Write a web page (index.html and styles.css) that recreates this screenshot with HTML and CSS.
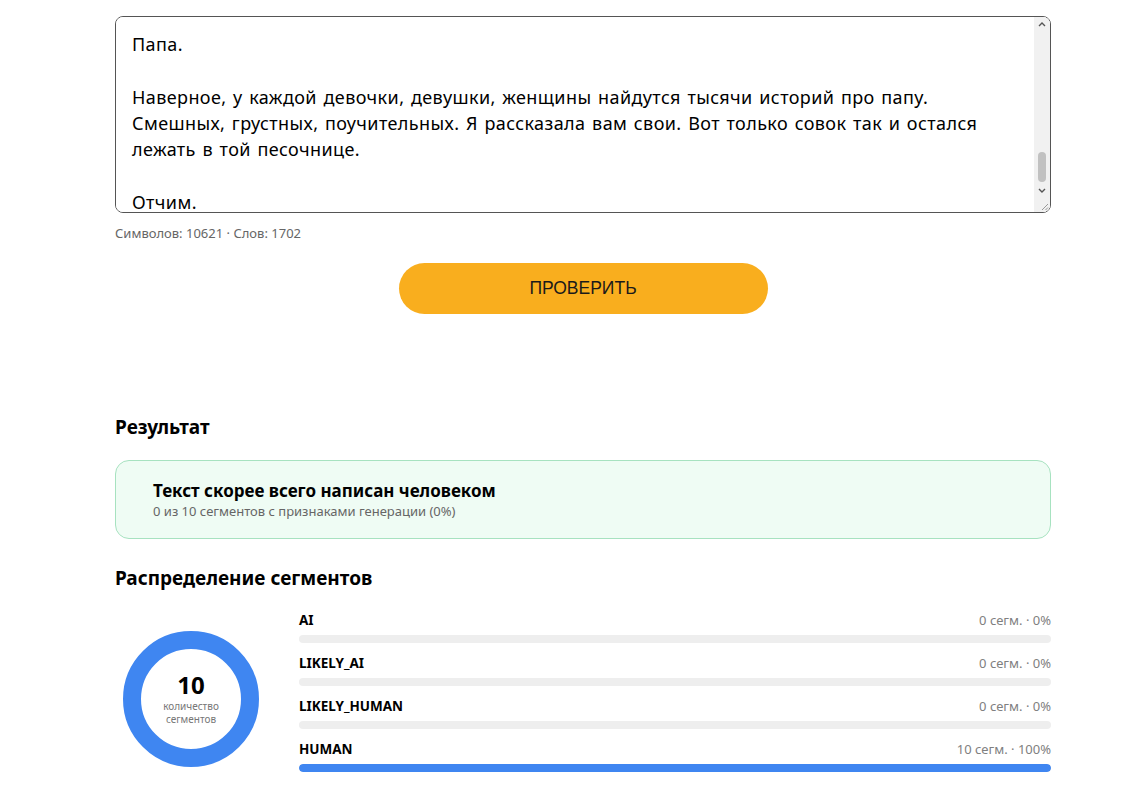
FILE: index.html
```html
<!DOCTYPE html>
<html lang="ru">
<head>
    <meta charset="UTF-8">
    <meta name="viewport" content="width=device-width, initial-scale=1.0">
    <title>Проверка текста</title>
    <link rel="stylesheet" href="styles.css">
</head>
<body>
    <main class="page">
        <section class="input-block">
            <div class="editor">
                <textarea id="source" class="source-text" spellcheck="false">Песочница.

Мне было пять лет, когда папа впервые привёл меня во двор.
Он сел на лавочку, развернул газету и сказал: «Играй».
Я играла. Строила куличики, копала ямки, искала клад.

Потом пришёл мальчик из соседнего подъезда.
Он забрал мой красный совок и не хотел отдавать.
Я плакала, а папа смотрел на меня поверх газеты.
«Разбирайся сама», — сказал он и перевернул страницу.

Я не разобралась. Совок так и остался у мальчика.
А потом мальчик ушёл домой, а совок бросил в песок.
Я его не подняла. Почему-то не захотелось.

Школа.

Папа никогда не проверял мои уроки.
Зато всегда спрашивал, кого я сегодня победила.
Я не понимала, что он имеет в виду.
Поняла гораздо позже, когда его уже не было рядом.

Двор.

Мы гуляли по вечерам, и он молчал.
Я рассказывала ему про подруг, про учительницу, про кота.
Он кивал и смотрел куда-то поверх домов.
Однажды он сказал: «Ты сильнее, чем думаешь».
Я запомнила. Хотя тогда не поверила.

Папа.

Наверное, у каждой девочки, девушки, женщины найдутся тысячи историй про папу. Смешных, грустных, поучительных. Я рассказала вам свои. Вот только совок так и остался лежать в той песочнице.

Отчим.</textarea>
                <!-- scrollbar drawn over the textarea's right edge -->
                <div class="scrollbar">
                    <svg class="sb-arrow" width="16" height="15" viewBox="0 0 16 15"><path d="M5 9 8 6 11 9" fill="none" stroke="#555" stroke-width="1.4"/></svg>
                    <div class="sb-track"><div class="sb-thumb"></div></div>
                    <svg class="sb-arrow" width="16" height="15" viewBox="0 0 16 15"><path d="M5 6 8 9 11 6" fill="none" stroke="#555" stroke-width="1.4"/></svg>
                    <svg class="sb-grip" width="16" height="14" viewBox="0 0 16 14"><path d="M14 6 8 12M14 9.5 11.5 12" stroke="#999" stroke-width="1"/></svg>
                </div>
            </div>
            <div class="counter">Символов: 10621 · Слов: 1702</div>
            <div class="actions">
                <button type="button" class="check-btn">ПРОВЕРИТЬ</button>
            </div>
        </section>

        <section class="result">
            <h2 class="section-title">Результат</h2>
            <div class="verdict">
                <div class="verdict-title">Текст скорее всего написан человеком</div>
                <div class="verdict-sub">0 из 10 сегментов с признаками генерации (0%)</div>
            </div>

            <h2 class="section-title">Распределение сегментов</h2>
            <div class="distribution">
                <div class="donut">
                    <svg width="136" height="136" viewBox="0 0 136 136">
                        <circle cx="68" cy="68" r="59" fill="none" stroke="#3f86f1" stroke-width="18"/>
                    </svg>
                    <div class="donut-center">
                        <div class="donut-value">10</div>
                        <div class="donut-label">количество<br>сегментов</div>
                    </div>
                </div>

                <div class="bars">
                    <div class="bar-row">
                        <div class="bar-head">
                            <span class="bar-name">AI</span>
                            <span class="bar-count">0 сегм. · 0%</span>
                        </div>
                        <div class="bar-track"><div class="bar-fill" style="width: 0%"></div></div>
                    </div>
                    <div class="bar-row">
                        <div class="bar-head">
                            <span class="bar-name">LIKELY_AI</span>
                            <span class="bar-count">0 сегм. · 0%</span>
                        </div>
                        <div class="bar-track"><div class="bar-fill" style="width: 0%"></div></div>
                    </div>
                    <div class="bar-row">
                        <div class="bar-head">
                            <span class="bar-name">LIKELY_HUMAN</span>
                            <span class="bar-count">0 сегм. · 0%</span>
                        </div>
                        <div class="bar-track"><div class="bar-fill" style="width: 0%"></div></div>
                    </div>
                    <div class="bar-row">
                        <div class="bar-head">
                            <span class="bar-name">HUMAN</span>
                            <span class="bar-count">10 сегм. · 100%</span>
                        </div>
                        <div class="bar-track"><div class="bar-fill" style="width: 100%"></div></div>
                    </div>
                </div>
            </div>
        </section>
    </main>

    <script>
        // keep the textarea scrolled to the last part of the text
        const source = document.getElementById("source");
        const lineHeight = parseFloat(getComputedStyle(source).lineHeight);
        const before = source.value.split("\n").indexOf("Папа.");
        source.scrollTop = Math.round(before * lineHeight);
    </script>
</body>
</html>
```

FILE: styles.css
```css
body {
    margin: 0;
    background: #fff;
    color: #000;
    font-family: "Noto Sans", "Open Sans", sans-serif;
}

.page {
    width: 936px;
    margin-left: 115px;
    padding-top: 16px;
    padding-bottom: 20px;
}

.editor {
    position: relative;
}

.source-text {
    display: block;
    width: 100%;
    height: 197px;
    box-sizing: border-box;
    padding: 14px 33px 14px 16px;
    border: 1px solid #555;
    border-radius: 8px;
    font-family: "Noto Sans", "Open Sans", sans-serif;
    font-size: 18px;
    line-height: 26.3px;
    letter-spacing: 0.4px;
    word-spacing: 1.5px;
    color: #000;
    resize: none;
    overflow-y: scroll;
    scrollbar-width: none;
}

.scrollbar {
    position: absolute;
    top: 1px;
    right: 1px;
    bottom: 1px;
    width: 16px;
    display: flex;
    flex-direction: column;
    background: #f1f1f1;
    border-radius: 0 7px 7px 0;
}

.sb-arrow,
.sb-grip {
    display: block;
    flex-shrink: 0;
}

.sb-track {
    flex: 1;
    display: flex;
    flex-direction: column;
    justify-content: flex-end;
    align-items: center;
    padding-bottom: 1px;
}

.sb-thumb {
    width: 8px;
    height: 30px;
    border-radius: 4px;
    background: #c1c1c1;
}

.counter {
    margin-top: 11px;
    font-size: 13px;
    color: #666;
}

.actions {
    display: flex;
    justify-content: center;
    margin-top: 21px;
}

.check-btn {
    width: 369px;
    height: 51px;
    border: none;
    border-radius: 26px;
    background: #f9ae1e;
    color: #1a1a1a;
    font-family: "Liberation Sans", Arial, sans-serif;
    font-size: 17.5px;
    cursor: pointer;
}

.result {
    margin-top: 100px;
}

.section-title {
    margin: 0 0 20px;
    font-size: 19px;
    font-weight: 700;
}

.verdict {
    box-sizing: border-box;
    height: 79px;
    padding: 19px 37px;
    margin-bottom: 26px;
    background: #effcf4;
    border: 1px solid #a7e2c0;
    border-radius: 14px;
}

.verdict-title {
    font-size: 17px;
    font-weight: 700;
    line-height: 22px;
}

.verdict-sub {
    font-size: 13px;
    color: #666;
    line-height: 19px;
}

.distribution {
    display: flex;
    align-items: flex-start;
}

.donut {
    position: relative;
    width: 136px;
    height: 136px;
    margin: 20px 40px 0 8px;
    flex-shrink: 0;
}

.donut svg {
    display: block;
}

.donut-center {
    position: absolute;
    inset: 0;
    display: flex;
    flex-direction: column;
    align-items: center;
    justify-content: center;
    text-align: center;
}

.donut-value {
    font-size: 24px;
    font-weight: 700;
    line-height: 26px;
    margin-bottom: 2px;
}

.donut-label {
    font-size: 10px;
    line-height: 13px;
    color: #777;
}

.bars {
    flex: 1;
    display: flex;
    flex-direction: column;
    gap: 11px;
}

.bar-head {
    display: flex;
    justify-content: space-between;
    align-items: baseline;
    margin-bottom: 6px;
}

.bar-name {
    font-size: 13.5px;
    font-weight: 700;
}

.bar-count {
    font-size: 13px;
    color: #808080;
}

.bar-track {
    height: 8px;
    border-radius: 4px;
    background: #eee;
    overflow: hidden;
}

.bar-fill {
    height: 100%;
    border-radius: 4px;
    background: #3f86f1;
}
```
